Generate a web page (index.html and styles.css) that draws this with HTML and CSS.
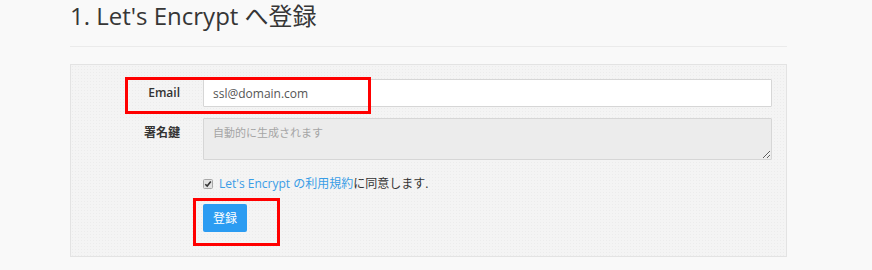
FILE: index.html
```html
<!DOCTYPE html>
<html lang="ja">
<head>
<meta charset="utf-8">
<title>Let's Encrypt へ登録</title>
<link rel="stylesheet" href="styles.css">
</head>
<body>
<div class="page">
  <h1 class="title">1. Let's Encrypt へ登録</h1>
  <hr class="rule">
  <form class="panel">
    <div class="row">
      <label class="label label-mid label-latin" for="email">Email</label>
      <input class="input" id="email" type="text" value="ssl@domain.com">
    </div>
    <div class="row row-gap">
      <label class="label label-top" for="key">署名鍵</label>
      <textarea class="textarea" id="key" placeholder="自動的に生成されます" readonly></textarea>
    </div>
    <div class="agree">
      <span class="check"><svg width="10" height="10" viewBox="0 0 10 10"><rect x="0.5" y="0.5" width="9" height="9" rx="1" fill="#e2e2e2" stroke="#a8a8a8"/><path d="M2.3 5.2 L4.2 7.1 L7.8 2.6" fill="none" stroke="#333" stroke-width="1.6"/></svg></span>
      <span class="agree-text"><a class="link" href="#">Let's Encrypt の利用規約</a>に同意します.</span>
    </div>
    <button class="btn" type="button">登録</button>
  </form>
  <div class="mark mark-email"></div>
  <div class="mark mark-btn"></div>
</div>
</body>
</html>
```
FILE: styles.css
```css
html, body {
  margin: 0;
  padding: 0;
  background: #f9f9f9;
}
body {
  font-family: "Open Sans", "Noto Sans CJK JP", sans-serif;
  font-size: 12px;
  color: #333;
}
.page {
  position: relative;
  width: 872px;
  height: 270px;
  padding-left: 70px;
  box-sizing: border-box;
}
.title {
  margin: 1px 0 0;
  font-family: "Open Sans", "Noto Sans CJK JP", sans-serif;
  font-weight: 400;
  font-size: 24px;
  line-height: 30px;
  color: #363636;
}
.rule {
  width: 717px;
  margin: 15px 0 17px;
  border: 0;
  border-top: 1px solid #ebebeb;
  height: 0;
}
.panel {
  width: 717px;
  box-sizing: border-box;
  border: 1px solid #e3e3e3;
  background-color: #f4f4f4;
  background-image: radial-gradient(#ececec 0.6px, transparent 0.7px);
  background-size: 3px 3px;
  padding: 14px 14px 24px 0;
}
.row {
  display: grid;
  grid-template-columns: 109px 569px;
  column-gap: 23px;
}
.row-gap {
  margin-top: 11px;
}
.label {
  text-align: right;
  font-weight: 700;
  font-size: 12px;
  color: #333;
}
.label-latin {
  font-weight: 600;
}
.label-mid {
  line-height: 28px;
}
.label-top {
  line-height: 18px;
  padding-top: 6px;
}
.input {
  box-sizing: border-box;
  height: 28px;
  margin: 0;
  padding: 0 9px;
  border: 1px solid #d6d6d6;
  border-radius: 1px;
  background: #fff;
  font-family: "Open Sans", sans-serif;
  font-size: 12px;
  color: #555;
  outline: none;
}
.textarea {
  box-sizing: border-box;
  height: 42px;
  margin: 0;
  padding: 5px 9px;
  border: 1px solid #d6d6d6;
  border-radius: 1px;
  background: #ececec;
  font-family: "Noto Sans CJK JP", sans-serif;
  font-size: 11px;
  line-height: 16px;
  color: #555;
  outline: none;
  resize: vertical;
}
.textarea::placeholder {
  color: #a5a5a5;
}
.agree {
  display: flex;
  align-items: center;
  gap: 6px;
  margin: 15px 0 0 132px;
  height: 18px;
  line-height: 18px;
  font-size: 12px;
  color: #333;
}
.check {
  display: flex;
  width: 10px;
  height: 10px;
}
.agree-text {
  font-family: "Open Sans", "Noto Sans CJK JP", sans-serif;
}
.link {
  color: #3a9de6;
  text-decoration: none;
}
.btn {
  display: block;
  margin: 11px 0 0 132px;
  height: 28px;
  padding: 0 10px;
  border: 0;
  border-radius: 2px;
  background: #2b9cf2;
  color: #fff;
  font-family: "Noto Sans CJK JP", sans-serif;
  font-size: 12px;
  line-height: 28px;
}
.mark {
  position: absolute;
  border: 3px solid #ff0000;
  box-sizing: border-box;
  pointer-events: none;
}
.mark-email {
  left: 125px;
  top: 76px;
  width: 246px;
  height: 37px;
}
.mark-btn {
  left: 193px;
  top: 197px;
  width: 87px;
  height: 48px;
}
```
